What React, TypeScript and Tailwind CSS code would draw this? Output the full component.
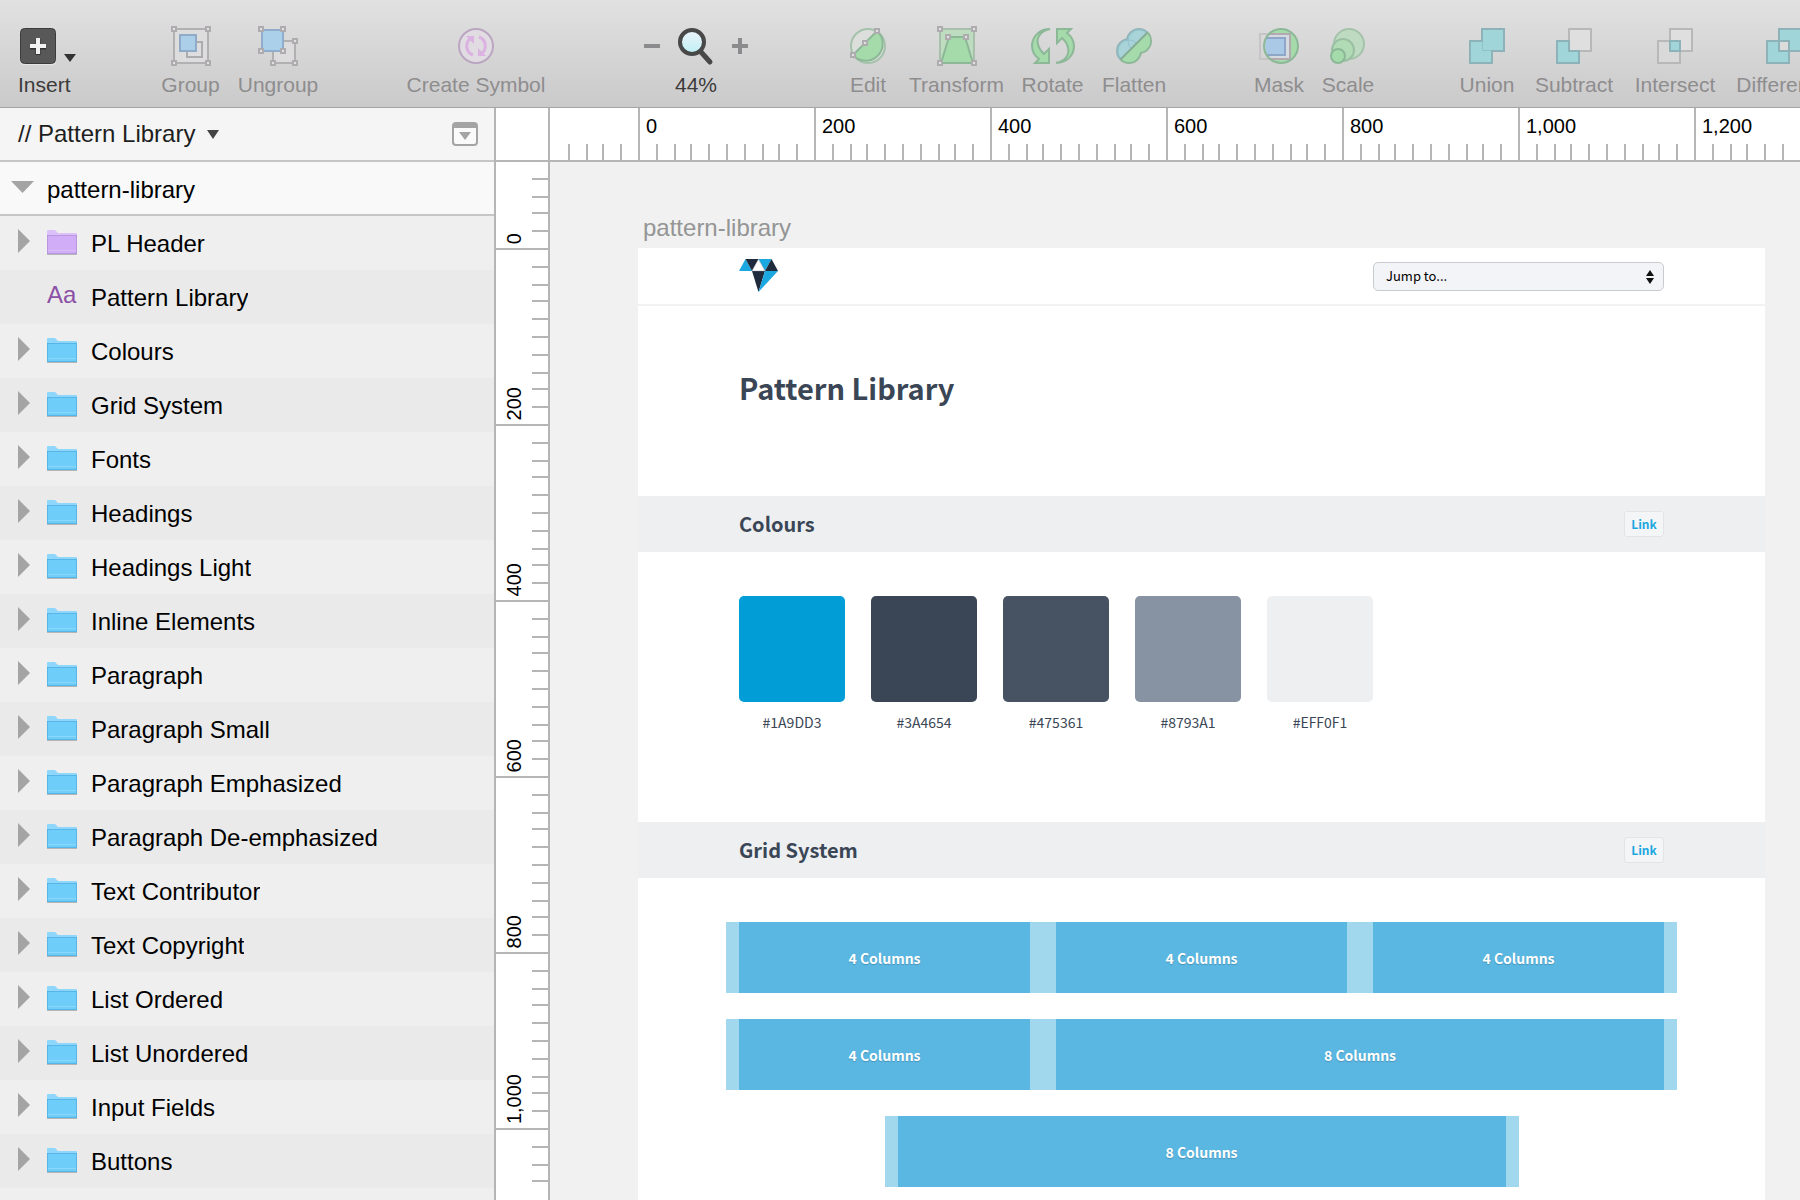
import React from "react";

const UI = "font-['Liberation_Sans',Arial,sans-serif]";
const DOC = "font-['Noto_Sans_CJK_SC','Noto_Sans',sans-serif]";

/* ---------- toolbar icons ---------- */

function Icon({ children, wide = false }: { children: React.ReactNode; wide?: boolean }) {
  return (
    <svg
      aria-hidden="true"
      viewBox={wide ? "0 0 60 44" : "0 0 44 44"}
      className={wide ? "h-11 w-[60px]" : "h-11 w-11"}
      fill="none"
    >
      {children}
    </svg>
  );
}

function Handles({ points }: { points: [number, number][] }) {
  return (
    <>
      {points.map(([x, y]) => (
        <rect key={`${x}-${y}`} x={x - 2} y={y - 2} width="4" height="4" fill="#e3e2e3" stroke="#aeacae" strokeWidth="2" />
      ))}
    </>
  );
}

const InsertIcon = () => (
  <Icon wide>
    <rect x="2" y="5" width="36" height="36" rx="4" fill="#e6e5e6" />
    <rect x="2.5" y="4.5" width="35" height="35" rx="4" fill="#585858" stroke="#3c3c3c" />
    <path d="M20 15v16M12 23h16" stroke="#333" strokeWidth="5" />
    <path d="M20 14v16M12 22h16" stroke="#f2f2f2" strokeWidth="4" />
    <path d="M46 30h12l-6 8z" fill="#333" />
  </Icon>
);

const GroupIcon = () => (
  <Icon>
    <rect x="5" y="5" width="34" height="34" fill="#dedddE" stroke="#b2b0b2" strokeWidth="2" />
    <rect x="18" y="18" width="15" height="15" fill="#dedddf" stroke="#acabad" strokeWidth="2" />
    <rect x="11" y="11" width="16" height="16" fill="#abcfe8" stroke="#8fabc8" strokeWidth="2" />
    <Handles points={[[5, 5], [39, 5], [5, 39], [39, 39]]} />
  </Icon>
);

const UngroupIcon = () => (
  <Icon>
    <rect x="17" y="17" width="22" height="22" fill="#dddcdd" stroke="#b2b0b2" strokeWidth="2" />
    <rect x="6" y="6" width="21" height="21" fill="#abd0ea" stroke="#90aecb" strokeWidth="2" />
    <Handles points={[[5, 5], [27, 5], [5, 27], [27, 27], [39, 17], [39, 39], [17, 39]]} />
  </Icon>
);

const SymbolIcon = () => (
  <Icon>
    <circle cx="22" cy="22" r="17" fill="#e0dce2" stroke="#bba6c2" strokeWidth="2" />
    <path d="M19 31C11 28 11 18 17 14" stroke="#dcb2e2" strokeWidth="3" />
    <path d="M12 12h8v8z" fill="#dcb2e2" />
    <path d="M25 13c8 3 8 13 2 17" stroke="#dcb2e2" strokeWidth="3" />
    <path d="M32 32h-8v-8z" fill="#dcb2e2" />
  </Icon>
);

const EditIcon = () => (
  <Icon>
    <circle cx="22" cy="22" r="17" fill="#dcdedc" stroke="#a5c2ac" strokeWidth="2" />
    <path d="M7 31 31 7A17 17 0 1 1 7 31z" fill="#a5dbab" stroke="#8db898" strokeWidth="2" />
    <Handles points={[[7, 31], [19, 19], [31, 7]]} />
  </Icon>
);

const TransformIcon = () => (
  <Icon>
    <rect x="5" y="5" width="34" height="34" fill="#bedcc0" stroke="#a7bfab" strokeWidth="2" />
    <path d="M6 39 14 13h16l8 26z" fill="#a5dbab" stroke="#8db898" strokeWidth="2" />
    <Handles points={[[5, 5], [39, 5], [5, 39], [39, 39], [13, 13], [31, 13]]} />
  </Icon>
);

const RotateIcon = () => {
  const arrow = "M19 5C8 5 1 13 1 22c0 5 3 10 7 13l-4 4h14V25l-5 5C7 25 5 17 8 12c2-4 6-6 11-7z";
  return (
    <Icon>
      <path d={arrow} fill="#a5dbab" stroke="#8db898" strokeWidth="2" />
      <path d={arrow} fill="#a5dbab" stroke="#8db898" strokeWidth="2" transform="rotate(180 22 22)" />
    </Icon>
  );
};

const FlattenIcon = () => (
  <Icon>
    <defs>
      <clipPath id="flatten-upper"><path d="M0 0h44L0 44z" /></clipPath>
      <clipPath id="flatten-lower"><path d="M44 0v44H0z" /></clipPath>
    </defs>
    <g clipPath="url(#flatten-upper)">
      <circle cx="27" cy="17" r="12" fill="#a7d3d9" stroke="#92b5bb" strokeWidth="2" />
      <circle cx="17" cy="27" r="12" fill="#a7d3d9" stroke="#92b5bb" strokeWidth="2" />
      <circle cx="27" cy="17" r="11" fill="#a7d3d9" />
      <circle cx="17" cy="27" r="11" stroke="#92c2ca" />
      <circle cx="27" cy="17" r="11" stroke="#92c2ca" />
    </g>
    <g clipPath="url(#flatten-lower)">
      <circle cx="27" cy="17" r="12" fill="#a5dbab" stroke="#8db898" strokeWidth="2" />
      <circle cx="17" cy="27" r="12" fill="#a5dbab" stroke="#8db898" strokeWidth="2" />
      <circle cx="27" cy="17" r="11" fill="#a5dbab" />
    </g>
    <path d="M8.500 35.500 35.500 8.500" stroke="#86ac94" strokeWidth="2" />
  </Icon>
);

const MaskIcon = () => (
  <Icon>
    <rect x="3" y="10" width="30" height="25" stroke="#c6c4c6" strokeWidth="2" />
    <circle cx="24" cy="22" r="17" fill="#a5dbab" />
    <path d="M12 10h21v25H13C8 30 6 18 12 10z" fill="#d5d9e0" />
    <path d="M12 10h21v25H13" stroke="#b3a9b1" strokeWidth="2" />
    <path d="M9 14h19v17H10C8 26 8 19 9 14z" fill="#a9c9e6" />
    <path d="M9 14h19v17H10" stroke="#8ea6c8" strokeWidth="2" />
    <circle cx="24" cy="22" r="17" stroke="#8db898" strokeWidth="2" />
  </Icon>
);

const ScaleIcon = () => (
  <Icon>
    <path d="M9 26 13 9l20 22-19 8z" fill="#bedac1" />
    <circle cx="23" cy="20" r="15" fill="#bedac1" stroke="#a4c3aa" strokeWidth="2" />
    <circle cx="17" cy="26" r="11" fill="#b1dbb5" stroke="#9abfa2" strokeWidth="2" />
    <circle cx="12" cy="32" r="7" fill="#a5dbab" stroke="#8db898" strokeWidth="2" />
  </Icon>
);

const TEAL = "#a0d5da";
const TEAL_EDGE = "#8db3b8";

const UnionIcon = () => (
  <Icon>
    <path d="M17 5h22v22H27v12H5V17h12z" fill={TEAL} stroke={TEAL_EDGE} strokeWidth="2" />
    <path d="M17.500 18v8.500H26" stroke="#8fc2c7" />
  </Icon>
);

const SubtractIcon = () => (
  <Icon>
    <rect x="17" y="5" width="22" height="22" fill="#e0dfe0" stroke="#b9b8b9" strokeWidth="2" />
    <path d="M5 17h12v10h10v12H5z" fill={TEAL} stroke={TEAL_EDGE} strokeWidth="2" />
  </Icon>
);

const IntersectIcon = () => (
  <Icon>
    <rect x="17" y="5" width="22" height="22" fill="#e0dfe0" stroke="#b9b8b9" strokeWidth="2" />
    <rect x="5" y="17" width="22" height="22" fill="#dad9da" stroke="#b9b8b9" strokeWidth="2" />
    <rect x="17" y="17" width="10" height="10" fill={TEAL} stroke={TEAL_EDGE} strokeWidth="2" />
  </Icon>
);

const DifferenceIcon = () => (
  <Icon>
    <path d="M17 5h22v22H27v12H5V17h12z" fill={TEAL} stroke={TEAL_EDGE} strokeWidth="2" />
    <rect x="17" y="17" width="10" height="10" fill="#dddcdd" stroke={TEAL_EDGE} strokeWidth="2" />
  </Icon>
);

/* ---------- toolbar ---------- */

function Tool({ label, width, children }: { label: string; width: string; children: React.ReactNode }) {
  return (
    <button type="button" className={`flex shrink-0 flex-col items-center gap-1 text-[#8e8d8e] ${width}`}>
      {children}
      <span className="text-[21px] leading-[26px] whitespace-nowrap">{label}</span>
    </button>
  );
}

function Toolbar() {
  return (
    <header className="flex h-[108px] shrink-0 items-start overflow-hidden border-b border-[#a6a5a6] bg-linear-to-b from-[#e2e1e2] to-[#cbcacb] pt-6 pl-[18px]">
      <button type="button" className="mr-[85px] flex w-[58px] shrink-0 flex-col items-start gap-1 text-[#3b3b3b]">
        <InsertIcon />
        <span className="text-[21px] leading-[26px]">Insert</span>
      </button>
      <div className="mr-[86px] flex gap-[17px]">
        <Tool label="Group" width="w-[59px]"><GroupIcon /></Tool>
        <Tool label="Ungroup" width="w-[82px]"><UngroupIcon /></Tool>
      </div>
      <div className="mr-24">
        <Tool label="Create Symbol" width="w-[142px]"><SymbolIcon /></Tool>
      </div>
      <div className="mr-[95px] flex w-[106px] shrink-0 flex-col items-center gap-1 text-[#3b3b3b]">
        <div className="flex h-11 w-full items-center justify-between">
          <button type="button" aria-label="Zoom out">
            <svg viewBox="0 0 18 18" className="size-[18px]"><path d="M1 9h16" stroke="#8b8a8c" strokeWidth="4" /></svg>
          </button>
          <button type="button" aria-label="Zoom">
            <svg viewBox="0 0 40 44" className="h-11 w-10" fill="none">
              <defs>
                <linearGradient id="lens" x1="0" y1="0" x2="0" y2="1">
                  <stop offset="0" stopColor="#eef3fb" />
                  <stop offset="1" stopColor="#bdf0f4" />
                </linearGradient>
              </defs>
              <path d="m25 28 9 10" stroke="#484848" strokeWidth="5" strokeLinecap="round" />
              <circle cx="16" cy="18" r="12" fill="url(#lens)" stroke="#484848" strokeWidth="4" />
            </svg>
          </button>
          <button type="button" aria-label="Zoom in">
            <svg viewBox="0 0 18 18" className="size-[18px]"><path d="M1 9h16M9 1v16" stroke="#8b8a8c" strokeWidth="4" /></svg>
          </button>
        </div>
        <span className="text-[21px] leading-[26px]">44%</span>
      </div>
      <div className="mr-[86px] flex gap-[17px]">
        <Tool label="Edit" width="w-12"><EditIcon /></Tool>
        <Tool label="Transform" width="w-[95px]"><TransformIcon /></Tool>
        <Tool label="Rotate" width="w-[63px]"><RotateIcon /></Tool>
        <Tool label="Flatten" width="w-[66px]"><FlattenIcon /></Tool>
      </div>
      <div className="mr-[84px] flex gap-4">
        <Tool label="Mask" width="w-[52px]"><MaskIcon /></Tool>
        <Tool label="Scale" width="w-[54px]"><ScaleIcon /></Tool>
      </div>
      <div className="flex gap-[18px]">
        <Tool label="Union" width="w-[56px]"><UnionIcon /></Tool>
        <Tool label="Subtract" width="w-[82px]"><SubtractIcon /></Tool>
        <Tool label="Intersect" width="w-[84px]"><IntersectIcon /></Tool>
        <Tool label="Difference" width="w-[98px]"><DifferenceIcon /></Tool>
      </div>
    </header>
  );
}

/* ---------- sidebar ---------- */

function Folder({ purple = false }: { purple?: boolean }) {
  const [tab, body, edge] = purple ? ["#dcc0fa", "#d0adf6", "#b08fd6"] : ["#8ed6fb", "#6fcdf9", "#4eade0"];
  return (
    <svg aria-hidden="true" viewBox="0 0 30 26" className="h-[26px] w-[30px]" fill="none">
      <path d="M0 24h30v1H0z" fill="#b5b5b5" />
      <path d="M0 1a1 1 0 0 1 1-1h7l3 3h18a1 1 0 0 1 1 1v20H0z" fill={tab} />
      <path d="M0 5h30v19H0z" fill={body} />
      <path d="M0 5.500h30M.5 5v18M29.500 5v18M0 23.500h30" stroke={edge} strokeOpacity=".7" />
      <path d="M1 20.500h28" stroke="#fff" strokeOpacity=".2" />
    </svg>
  );
}

const LAYERS = [
  "PL Header",
  "Pattern Library",
  "Colours",
  "Grid System",
  "Fonts",
  "Headings",
  "Headings Light",
  "Inline Elements",
  "Paragraph",
  "Paragraph Small",
  "Paragraph Emphasized",
  "Paragraph De-emphasized",
  "Text Contributor",
  "Text Copyright",
  "List Ordered",
  "List Unordered",
  "Input Fields",
  "Buttons",
];

function Layer({ name }: { name: string }) {
  const isText = name === "Pattern Library";
  return (
    <li className="flex h-[54px] items-center bg-[#efefef] even:bg-[#eaeaea]">
      {isText ? (
        <span className="w-[46px] shrink-0" />
      ) : (
        <button type="button" aria-label={`Expand ${name}`} className="w-[46px] shrink-0 pb-1 pl-[18px]">
          <svg viewBox="0 0 12 24" className="h-6 w-3"><path d="M0 0v24l12-12z" fill="#a4a4a4" /></svg>
        </button>
      )}
      <span className="flex w-[45px] shrink-0 items-center pl-px">
        {isText ? (
          <span className="pb-1 text-2xl leading-6 text-[#8b4fa5]">Aa</span>
        ) : (
          <Folder purple={name === "PL Header"} />
        )}
      </span>
      <span className="truncate pt-0.5 text-2xl leading-8">{name}</span>
    </li>
  );
}

function Sidebar() {
  return (
    <aside className="w-[494px] shrink-0 overflow-hidden bg-[#efefef] text-black">
      <div className="flex h-[54px] items-center justify-between border-b-2 border-[#c6c6c6] bg-[#f5f5f5] pr-4 pl-[18px]">
        <button type="button" className="flex items-center gap-3 text-2xl leading-8 text-[#1e1e1e]">
          // Pattern Library
          <svg viewBox="0 0 12 9" className="h-[9px] w-3"><path d="M0 0h12L6 9z" fill="#444" /></svg>
        </button>
        <button type="button" aria-label="Toggle page list">
          <svg viewBox="0 0 26 24" className="h-6 w-[26px]" fill="none">
            <rect x="1" y="1" width="24" height="22" rx="3" fill="#fafafa" stroke="#a4a4a4" strokeWidth="2" />
            <path d="M1 2h24v4H1z" fill="#a4a4a4" />
            <path d="M7 10h12l-6 8z" fill="#a4a4a4" />
          </svg>
        </button>
      </div>
      <div className="flex h-[54px] items-center border-b-2 border-[#c6c6c6] bg-[#f9f9f9] pl-[11px]">
        <button type="button" aria-label="Collapse pattern-library" className="w-9 pb-0.5">
          <svg viewBox="0 0 23 12" className="h-3 w-[23px]"><path d="M0 0h23L11.500 12z" fill="#a4a4a4" /></svg>
        </button>
        <span className="pt-1 text-2xl leading-8">pattern-library</span>
      </div>
      <ul>
        {LAYERS.map((name) => (
          <Layer key={name} name={name} />
        ))}
      </ul>
    </aside>
  );
}

/* ---------- rulers ---------- */

function Ticks({ count, className }: { count: number; className: string }) {
  return (
    <div className={className}>
      <i />
      {Array.from({ length: count }, (_, i) => (
        <i key={i} className="border-[#b5b5b5] in-data-[axis=x]:border-l-2 in-data-[axis=y]:border-t-2" />
      ))}
    </div>
  );
}

function HorizontalRuler() {
  return (
    <div data-axis="x" className="flex h-[54px] shrink-0 overflow-hidden border-b-2 border-[#b5b5b5] bg-white text-black">
      <Ticks count={4} className="grid h-4 shrink-0 self-end grid-cols-[18px_18px_16px_18px_18px]" />
      {["0", "200", "400", "600", "800", "1,000", "1,200"].map((mark) => (
        <div key={mark} className="w-44 shrink-0 border-l-2 border-[#b5b5b5]">
          <div className="h-9 pl-1.5 text-xl leading-9">{mark}</div>
          <Ticks count={9} className="grid h-4 grid-cols-[16px_18px_16px_18px_18px_18px_18px_16px_18px_18px]" />
        </div>
      ))}
    </div>
  );
}

function VerticalLabel({ children }: { children?: React.ReactNode }) {
  return (
    <div className="flex w-9 items-end justify-center pb-1">
      <span className="rotate-180 text-xl leading-6 [writing-mode:vertical-rl]">{children}</span>
    </div>
  );
}

function VerticalRuler() {
  return (
    <div data-axis="y" className="flex w-14 shrink-0 flex-col overflow-hidden border-x-2 border-[#b5b5b5] bg-white text-black">
      <div className="h-[54px] shrink-0 border-b-2 border-[#b5b5b5]" />
      <div className="flex shrink-0">
        <VerticalLabel>0</VerticalLabel>
        <Ticks count={4} className="grid w-4 grid-rows-[16px_18px_16px_18px_18px]" />
      </div>
      {["200", "400", "600", "800", "1,000"].map((mark) => (
        <div key={mark} className="flex h-44 shrink-0 border-t-2 border-[#b5b5b5]">
          <VerticalLabel>{mark}</VerticalLabel>
          <Ticks count={9} className="grid w-4 grid-rows-[16px_18px_16px_18px_18px_18px_18px_16px_18px_18px]" />
        </div>
      ))}
      <div className="flex shrink-0 border-t-2 border-[#b5b5b5]">
        <VerticalLabel />
        <Ticks count={3} className="grid w-4 grid-rows-[16px_18px_16px_18px]" />
      </div>
    </div>
  );
}

/* ---------- artboard ---------- */

function SectionHeader({ title, id }: { title: string; id: string }) {
  return (
    <div id={id} className="flex h-14 items-center justify-between bg-[#eeeff1] px-[101px]">
      <h2 className="text-[20px] leading-7 font-bold">{title}</h2>
      <a
        href={`#${id}`}
        className="flex h-[26px] w-10 items-center justify-center rounded-[3px] border border-[#e2e4e6] bg-[#f4f5f7] text-xs leading-4 font-bold text-[#1aa7e0]"
      >
        Link
      </a>
    </div>
  );
}

const SWATCHES = [
  { hex: "#1A9DD3", fill: "bg-[#009dd7]" },
  { hex: "#3A4654", fill: "bg-[#3a4655]" },
  { hex: "#475361", fill: "bg-[#475362]" },
  { hex: "#8793A1", fill: "bg-[#8793a3]" },
  { hex: "#EFF0F1", fill: "bg-[#eeeff1]" },
];

function Column({ label, span }: { label: string; span: string }) {
  return (
    <div className={`bg-[#a2d8ed] px-[13px] ${span}`}>
      <div className="flex h-[71px] items-center justify-center bg-[#5ab7e2] text-sm leading-5 font-bold text-white text-shadow-[0_1px_1px_rgb(0_0_0/0.2)]">
        {label}
      </div>
    </div>
  );
}

function Artboard() {
  return (
    <article className={`bg-white text-[#3a4655] ${DOC}`}>
      <div className="flex h-[58px] items-center justify-between border-b-2 border-[#f1f2f3] px-[101px]">
        <svg aria-label="Diamond logo" role="img" viewBox="0 0 39 33" className="mb-0.5 h-[33px] w-[39px]">
          <path d="M6.500 0 0 12h13z" fill="#1ba8e1" />
          <path d="M6.500 0h13L13 12z" fill="#1f2a3c" />
          <path d="M19.500 0h13L26 12z" fill="#1ba8e1" />
          <path d="M32.500 0 39 12H26z" fill="#1f2a3c" />
          <path d="M13 12h13l-6.500 21z" fill="#1f2a3c" />
          <path d="M26 12h13L19.500 33z" fill="#1ba8e1" />
          <path d="M19.500 .3 13 12h13z" fill="#fff" stroke="#7a8696" strokeWidth=".4" />
        </svg>
        <div className="relative w-[291px]">
          <select
            aria-label="Jump to section"
            className="h-[29px] w-full appearance-none rounded-[5px] border border-[#c9cbcd] bg-[#f3f4f7] pl-3 text-[13px] leading-5 text-black"
          >
            <option>Jump to...</option>
          </select>
          <svg aria-hidden="true" viewBox="0 0 8 14" className="pointer-events-none absolute top-2 right-2.5 h-3.5 w-2">
            <path d="M4 0l4 6H0zM4 14l4-6H0z" fill="#111" />
          </svg>
        </div>
      </div>
      <div className="flex h-[190px] items-center px-[101px] pb-7">
        <h1 className="text-[29px] leading-9 font-bold">Pattern Library</h1>
      </div>
      <section>
        <SectionHeader title="Colours" id="colours" />
        <ul className="flex h-[270px] gap-[26px] px-[101px] pt-11">
          {SWATCHES.map(({ hex, fill }) => (
            <li key={hex} className="flex flex-col items-center gap-2.5">
              <div className={`size-[106px] rounded-[5px] ${fill}`} />
              <span className="text-sm leading-5">{hex}</span>
            </li>
          ))}
        </ul>
      </section>
      <section>
        <SectionHeader title="Grid System" id="grid-system" />
        <div className="grid grid-cols-12 gap-y-[26px] px-[88px] pt-11 pb-20">
          <Column label="4 Columns" span="col-span-4" />
          <Column label="4 Columns" span="col-span-4" />
          <Column label="4 Columns" span="col-span-4" />
          <Column label="4 Columns" span="col-span-4" />
          <Column label="8 Columns" span="col-span-8" />
          <Column label="8 Columns" span="col-span-8 col-start-3" />
        </div>
      </section>
    </article>
  );
}

export default function App() {
  return (
    <div className={`flex h-screen flex-col overflow-hidden ${UI}`}>
      <Toolbar />
      <div className="flex min-h-0 flex-1">
        <Sidebar />
        <VerticalRuler />
        <main className="flex min-w-0 flex-1 flex-col bg-[#f1f1f1]">
          <HorizontalRuler />
          <div className="min-h-0 flex-1 overflow-hidden pt-[50px] pr-[35px] pl-[88px]">
            <p className="h-9 pl-[5px] text-2xl leading-8 text-[#949594]">pattern-library</p>
            <Artboard />
          </div>
        </main>
      </div>
    </div>
  );
}
